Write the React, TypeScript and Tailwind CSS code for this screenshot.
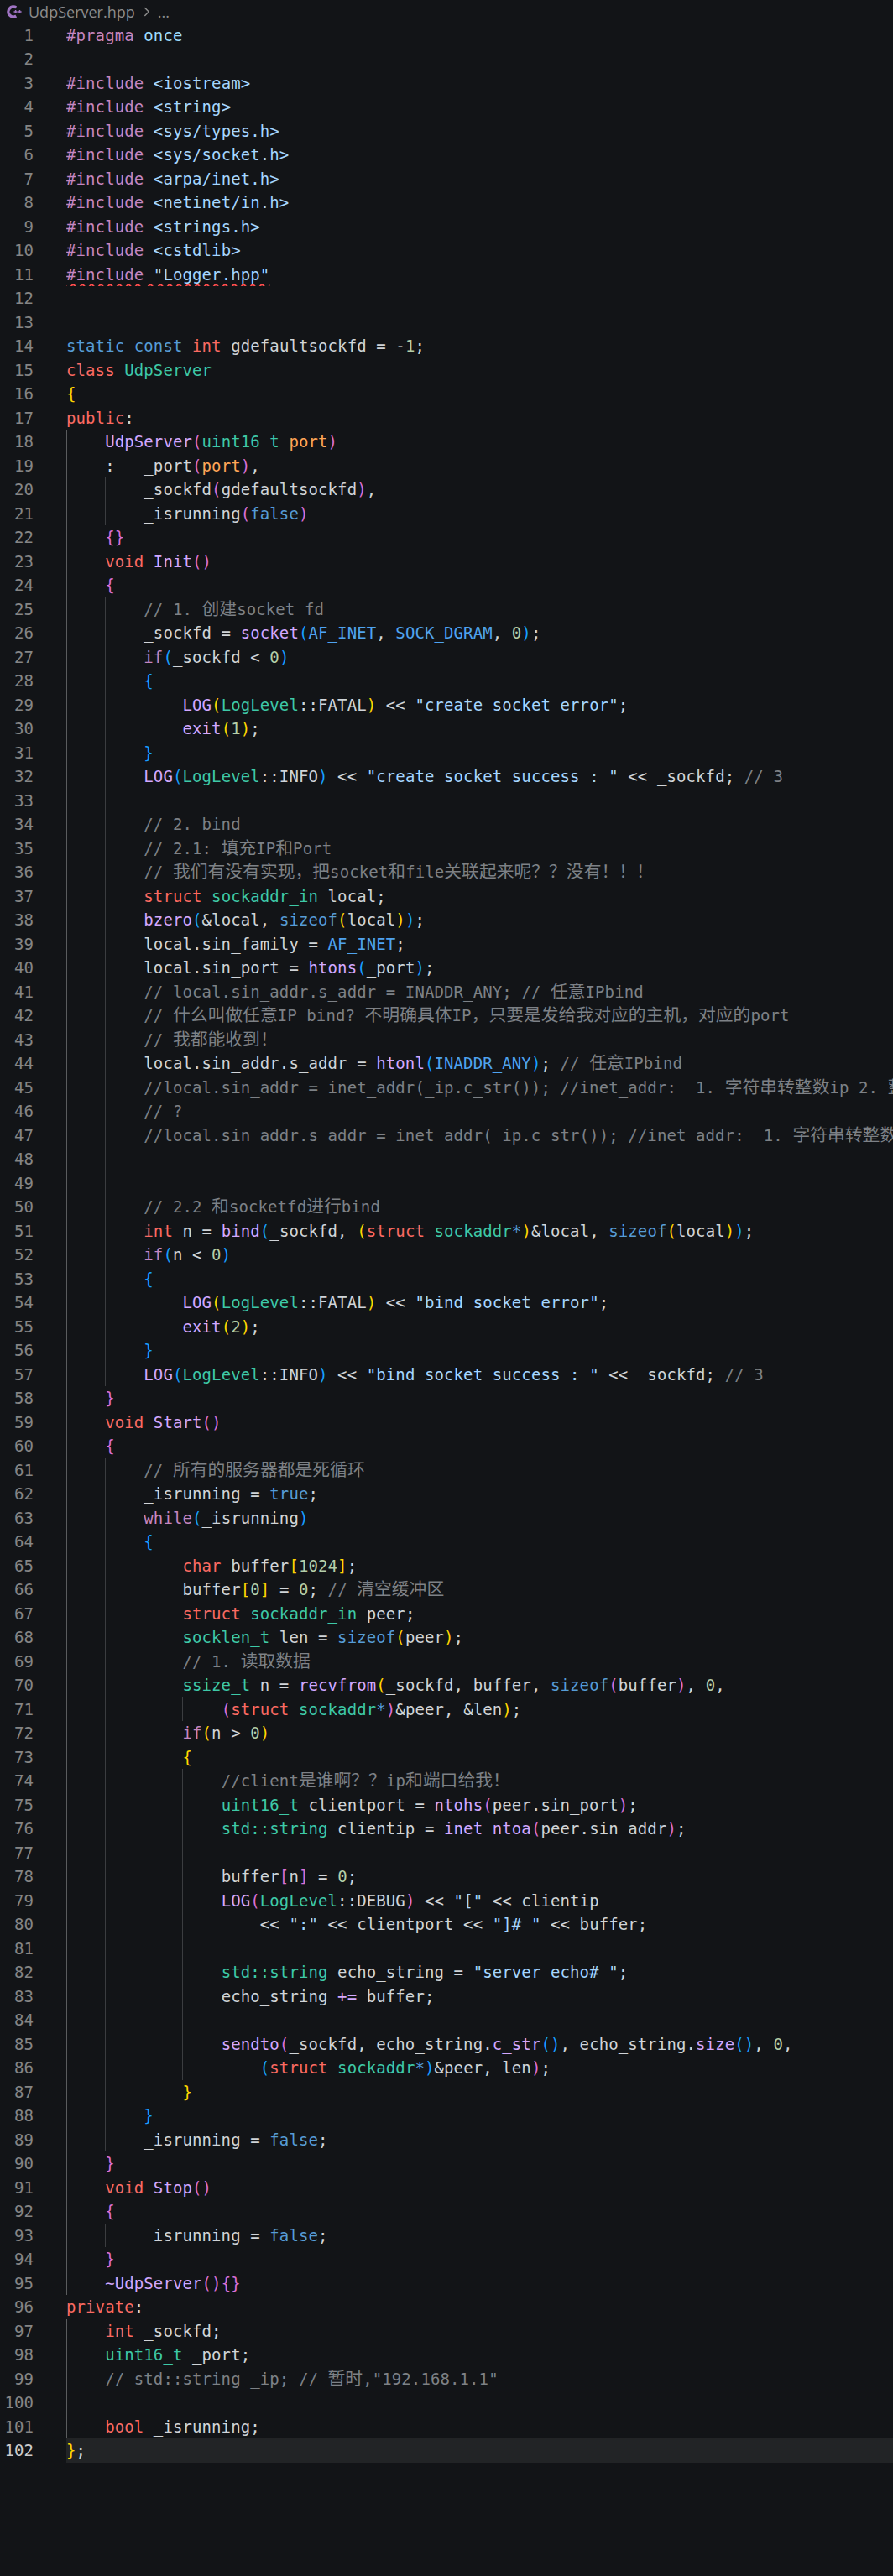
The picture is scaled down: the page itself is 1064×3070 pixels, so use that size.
import { ChevronRight } from "lucide-react";

const COLORS: Record<string, string> = {
  r: "text-[#fa6a62]", // keywords
  b: "text-[#569cd6]", // storage / literals
  p: "text-[#c586c0]", // preprocessor, control flow
  f: "text-[#d2a8ff]", // functions
  t: "text-[#3ec9a7]", // types
  o: "text-[#ffa657]", // params
  s: "text-[#a5d6ff]", // strings
  m: "text-[#4fa3ef]", // macros
  n: "text-[#b5cea8]", // numbers
  c: "text-[#7d8186]", // comments
  i: "text-[#9cdcfe]",
  y: "text-[#ffd700]", // bracket depth 1
  v: "text-[#da70d6]", // bracket depth 2
  l: "text-[#179fff]", // bracket depth 3
};

// [indent guides, markup] — «x:text» picks a colour from COLORS
const LINES: [number, string][] = [
  [0, "«p:#pragma» «i:once»"],
  [0, ""],
  [0, "«p:#include» «s:<iostream>»"],
  [0, "«p:#include» «s:<string>»"],
  [0, "«p:#include» «s:<sys/types.h>»"],
  [0, "«p:#include» «s:<sys/socket.h>»"],
  [0, "«p:#include» «s:<arpa/inet.h>»"],
  [0, "«p:#include» «s:<netinet/in.h>»"],
  [0, "«p:#include» «s:<strings.h>»"],
  [0, "«p:#include» «s:<cstdlib>»"],
  [0, '«p:#include» «s:"Logger.hpp"»'],
  [0, ""],
  [0, ""],
  [0, "«b:static» «b:const» «r:int» gdefaultsockfd = -«n:1»;"],
  [0, "«r:class» «t:UdpServer»"],
  [0, "«y:{»"],
  [0, "«r:public»:"],
  [1, "«f:UdpServer»«v:(»«t:uint16_t» «o:port»«v:)»"],
  [1, ":   _port«v:(»«o:port»«v:)»,"],
  [2, "_sockfd«v:(»gdefaultsockfd«v:)»,"],
  [2, "_isrunning«v:(»«b:false»«v:)»"],
  [1, "«v:{}»"],
  [1, "«r:void» «f:Init»«v:()»"],
  [1, "«v:{»"],
  [2, "«c:// 1. 创建socket fd»"],
  [2, "_sockfd = «f:socket»«l:(»«m:AF_INET», «m:SOCK_DGRAM», «n:0»«l:)»;"],
  [2, "«p:if»«l:(»_sockfd < «n:0»«l:)»"],
  [2, "«l:{»"],
  [3, '«f:LOG»«y:(»«t:LogLevel»::FATAL«y:)» << «s:"create socket error"»;'],
  [3, "«f:exit»«y:(»«n:1»«y:)»;"],
  [2, "«l:}»"],
  [2, '«f:LOG»«l:(»«t:LogLevel»::INFO«l:)» << «s:"create socket success : "» << _sockfd; «c:// 3»'],
  [2, ""],
  [2, "«c:// 2. bind»"],
  [2, "«c:// 2.1: 填充IP和Port»"],
  [2, "«c:// 我们有没有实现，把socket和file关联起来呢？？没有！！！»"],
  [2, "«r:struct» «t:sockaddr_in» local;"],
  [2, "«f:bzero»«l:(»&local, «b:sizeof»«y:(»local«y:)»«l:)»;"],
  [2, "local.sin_family = «m:AF_INET»;"],
  [2, "local.sin_port = «f:htons»«l:(»_port«l:)»;"],
  [2, "«c:// local.sin_addr.s_addr = INADDR_ANY; // 任意IPbind»"],
  [2, "«c:// 什么叫做任意IP bind? 不明确具体IP，只要是发给我对应的主机，对应的port»"],
  [2, "«c:// 我都能收到！»"],
  [2, "local.sin_addr.s_addr = «f:htonl»«l:(»«m:INADDR_ANY»«l:)»; «c:// 任意IPbind»"],
  [2, "«c://local.sin_addr = inet_addr(_ip.c_str()); //inet_addr:  1. 字符串转整数ip 2. 整数转网络序»"],
  [2, "«c:// ?»"],
  [2, "«c://local.sin_addr.s_addr = inet_addr(_ip.c_str()); //inet_addr:  1. 字符串转整数ip 2. 整数转网络序»"],
  [2, ""],
  [2, ""],
  [2, "«c:// 2.2 和socketfd进行bind»"],
  [2, "«r:int» n = «f:bind»«l:(»_sockfd, «y:(»«r:struct» «t:sockaddr»«b:*»«y:)»&local, «b:sizeof»«y:(»local«y:)»«l:)»;"],
  [2, "«p:if»«l:(»n < «n:0»«l:)»"],
  [2, "«l:{»"],
  [3, '«f:LOG»«y:(»«t:LogLevel»::FATAL«y:)» << «s:"bind socket error"»;'],
  [3, "«f:exit»«y:(»«n:2»«y:)»;"],
  [2, "«l:}»"],
  [2, '«f:LOG»«l:(»«t:LogLevel»::INFO«l:)» << «s:"bind socket success : "» << _sockfd; «c:// 3»'],
  [1, "«v:}»"],
  [1, "«r:void» «f:Start»«v:()»"],
  [1, "«v:{»"],
  [2, "«c:// 所有的服务器都是死循环»"],
  [2, "_isrunning = «b:true»;"],
  [2, "«p:while»«l:(»_isrunning«l:)»"],
  [2, "«l:{»"],
  [3, "«r:char» buffer«y:[»«n:1024»«y:]»;"],
  [3, "buffer«y:[»«n:0»«y:]» = «n:0»; «c:// 清空缓冲区»"],
  [3, "«r:struct» «t:sockaddr_in» peer;"],
  [3, "«t:socklen_t» len = «b:sizeof»«y:(»peer«y:)»;"],
  [3, "«c:// 1. 读取数据»"],
  [3, "«t:ssize_t» n = «f:recvfrom»«y:(»_sockfd, buffer, «b:sizeof»«v:(»buffer«v:)», «n:0»,"],
  [4, "«v:(»«r:struct» «t:sockaddr»«b:*»«v:)»&peer, &len«y:)»;"],
  [3, "«p:if»«y:(»n > «n:0»«y:)»"],
  [3, "«y:{»"],
  [4, "«c://client是谁啊？？ip和端口给我！»"],
  [4, "«t:uint16_t» clientport = «f:ntohs»«v:(»peer.sin_port«v:)»;"],
  [4, "«t:std::string» clientip = «f:inet_ntoa»«v:(»peer.sin_addr«v:)»;"],
  [4, ""],
  [4, "buffer«v:[»n«v:]» = «n:0»;"],
  [4, '«f:LOG»«v:(»«t:LogLevel»::DEBUG«v:)» << «s:"["» << clientip'],
  [5, '<< «s:":"» << clientport << «s:"]# "» << buffer;'],
  [5, ""],
  [4, '«t:std::string» echo_string = «s:"server echo# "»;'],
  [4, "echo_string «f:+=» buffer;"],
  [4, ""],
  [4, "«f:sendto»«v:(»_sockfd, echo_string.«f:c_str»«l:()», echo_string.«f:size»«l:()», «n:0»,"],
  [5, "«l:(»«r:struct» «t:sockaddr»«b:*»«l:)»&peer, len«v:)»;"],
  [3, "«y:}»"],
  [2, "«l:}»"],
  [2, "_isrunning = «b:false»;"],
  [1, "«v:}»"],
  [1, "«r:void» «f:Stop»«v:()»"],
  [1, "«v:{»"],
  [2, "_isrunning = «b:false»;"],
  [1, "«v:}»"],
  [1, "«f:~UdpServer»«v:()»«v:{}»"],
  [0, "«r:private»:"],
  [1, "«r:int» _sockfd;"],
  [1, "«t:uint16_t» _port;"],
  [1, '«c:// std::string _ip; // 暂时,"192.168.1.1"»'],
  [1, ""],
  [1, "«r:bool» _isrunning;"],
  [0, "«y:}»;"],
];

function CppIcon() {
  return (
    <svg width="18" height="18" viewBox="0 0 18 18" fill="none" aria-hidden="true">
      <path
        d="M11.2 4A6 6 0 1 0 11.2 14"
        stroke="#a074c4"
        strokeWidth="3.4"
        strokeLinecap="butt"
      />
      <path
        d="M8.5 9h4.2M10.6 6.9v4.2M13.4 9h4.2M15.5 6.9v4.2"
        stroke="#a074c4"
        strokeWidth="1.5"
      />
    </svg>
  );
}

function Run({ text, color }: { text: string; color: string }) {
  const parts = text.split(/([\u3000-\u9fff\uff00-\uffef]+)/);
  return (
    <span className={color}>
      {parts.map((p, i) =>
        i % 2 === 1 ? (
          <span key={i} className="text-[20.8px] leading-none tracking-normal">
            {p}
          </span>
        ) : (
          p
        ),
      )}
    </span>
  );
}

function Code({ src }: { src: string }) {
  const parts = src.split(/«(\w):(.*?)»/);
  const out = [];
  for (let i = 0; i < parts.length; i += 3) {
    if (parts[i]) out.push(<Run key={i} text={parts[i]} color="" />);
    if (i + 2 < parts.length)
      out.push(<Run key={i + 1} text={parts[i + 2]} color={COLORS[parts[i + 1]]} />);
  }
  return <>{out}</>;
}

function Row({ n, guides, src }: { n: number; guides: number; src: string }) {
  const current = n === 102;
  return (
    <div className="flex h-[28.5px]">
      <div
        className={`w-[40px] shrink-0 text-right ${current ? "text-[#cccccc]" : "text-[#858585]"}`}
      >
        {n}
      </div>
      <div
        className={`ml-[39px] flex min-w-0 flex-1 overflow-hidden whitespace-pre ${current ? "bg-[#222426]" : ""}`}
      >
        {Array.from({ length: guides }).map((_, i) => (
          <div
            key={i}
            className={`w-[46.16px] shrink-0 border-l ${i === 0 ? "border-[#5a5c5e]" : "border-[#3b3d40]"}`}
          />
        ))}
        <div
          className={
            n === 11
              ? "underline decoration-[#ff4d4d] decoration-wavy decoration-[1.5px] underline-offset-[4px]"
              : ""
          }
        >
          <Code src={src} />
        </div>
      </div>
    </div>
  );
}

export default function App() {
  return (
    <div className="min-h-[3070px] w-[1064px] overflow-hidden bg-[#121417] font-['DejaVu_Sans_Mono','Noto_Sans_CJK_SC',monospace] text-[19px] leading-[28.5px] tracking-[0.1px] text-[#d0d4d8]">
      <div className="flex h-[27.75px] items-center pl-[8px] font-['Open_Sans',sans-serif] text-[18px] tracking-normal text-[#8c8c8c]">
        <CppIcon />
        <span className="ml-[8px]">UdpServer.hpp</span>
        <ChevronRight size={18} className="ml-[5px]" aria-hidden="true" />
        <span className="ml-[4px]">...</span>
      </div>
      <div>
        {LINES.map(([guides, src], i) => (
          <Row key={i} n={i + 1} guides={guides} src={src} />
        ))}
      </div>
    </div>
  );
}
